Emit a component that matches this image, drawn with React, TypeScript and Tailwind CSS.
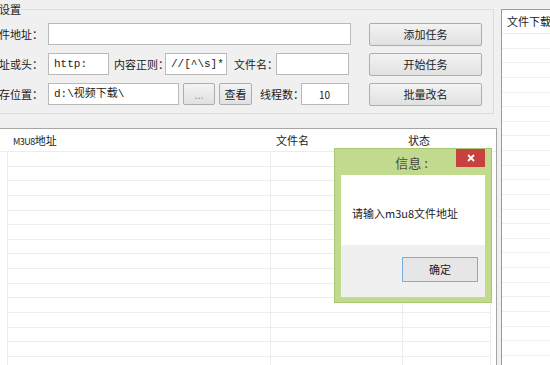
import React from "react"

const cjk = "font-['Noto_Sans_CJK_SC',sans-serif]"

function Label({ text, w }: { text: string; w: string }) {
  return (
    <div className={`flex shrink-0 justify-end whitespace-nowrap text-[11px] text-[#1a1a1a] ${w}`}>
      <span>{text}</span>
    </div>
  )
}

function Field({ value, w, mono }: { value?: string; w: string; mono?: boolean }) {
  return (
    <div
      className={`flex h-[22px] shrink-0 items-center border border-[#b9b9b9] bg-white px-[5px] text-[11px] text-[#222] ${w} ${
        mono ? "font-['Liberation_Mono','Noto_Sans_CJK_SC',monospace] text-[10px]" : ""
      }`}
    >
      {value}
    </div>
  )
}

function Btn({ children, className }: { children: React.ReactNode; className: string }) {
  return (
    <div
      className={`flex shrink-0 items-center justify-center rounded-[2px] border border-[#adadad] bg-gradient-to-b from-[#f3f3f3] to-[#e1e1e1] text-[11px] text-[#222] ${className}`}
    >
      {children}
    </div>
  )
}

const tableRows = Array.from({ length: 15 })
const sideRows = Array.from({ length: 23 })

export default function App() {
  return (
    <div className={`relative h-[365px] w-[550px] overflow-hidden bg-[#f0f0f0] ${cjk}`}>
      <div className="-ml-[10px] flex gap-[4px]">
        {/* left side: settings + task list */}
        <div className="flex w-[507px] shrink-0 flex-col">
          <fieldset className="mt-[1px] w-[504px] border border-[#dcdcdc] pb-[7px] pt-[6px]">
            <legend className="ml-[8px] px-0 text-[11px] leading-[16px] text-[#1a1a1a]">设置</legend>
            <div className="flex">
              <div className="flex flex-col gap-[8px]">
                <div className="flex h-[22px] items-center">
                  <Label text="文件地址：" w="w-[52px]" />
                  <div className="ml-[5px]">
                    <Field w="w-[303px]" />
                  </div>
                </div>
                <div className="flex h-[22px] items-center">
                  <Label text="网址或头：" w="w-[52px]" />
                  <div className="ml-[5px]">
                    <Field w="w-[61px]" value="http:" mono />
                  </div>
                  <span className="ml-[5px] whitespace-nowrap text-[11px] text-[#1a1a1a]">内容正则：</span>
                  <div className="ml-[-4px]">
                    <Field w="w-[62px]" value="//[^\s]*" mono />
                  </div>
                  <span className="ml-[7px] whitespace-nowrap text-[11px] text-[#1a1a1a]">文件名：</span>
                  <div className="ml-[-2px]">
                    <Field w="w-[73px]" />
                  </div>
                </div>
                <div className="flex h-[22px] items-center">
                  <Label text="保存位置：" w="w-[52px]" />
                  <div className="ml-[5px]">
                    <Field w="w-[131px]" value="d:\视频下载\" mono />
                  </div>
                  <Btn className="ml-[4px] h-[22px] w-[32px] text-[#999]">...</Btn>
                  <Btn className="ml-[4px] h-[22px] w-[33px]">查看</Btn>
                  <span className="ml-[8px] whitespace-nowrap text-[11px] text-[#1a1a1a]">线程数：</span>
                  <div className="ml-[-3px]">
                    <div className="flex h-[22px] w-[48px] items-center border border-[#b9b9b9] bg-white pl-[17px] text-[10px] text-[#222]">
                      10
                    </div>
                  </div>
                </div>
              </div>
              <div className="ml-[18px] flex flex-col gap-[7px]">
                <Btn className="h-[23px] w-[113px]">添加任务</Btn>
                <Btn className="h-[23px] w-[113px]">开始任务</Btn>
                <Btn className="h-[23px] w-[113px]">批量改名</Btn>
              </div>
            </div>
          </fieldset>

          {/* task table */}
          <div className="mt-[14px] h-[260px] w-[507px] border-t border-r border-[#a6a6a6] bg-white">
            <div className="flex h-[23px] items-center border-b border-[#ececec] text-[11px] text-[#1a1a1a]">
              <div className="w-[23px] shrink-0" />
              <div className="w-[263px] shrink-0">
                <span className="text-[9px] tracking-[-0.5px]">M3U8</span>地址
              </div>
              <div className="w-[132px] shrink-0">文件名</div>
              <div className="w-[88px] shrink-0">状态</div>
            </div>
            <div className="flex">
              <div className="h-[220px] w-[18px] shrink-0 border-r border-[#ececec]" />
              <div className="h-[220px] w-[263px] shrink-0 border-r border-[#ececec]">
                {tableRows.map((_, i) => (
                  <div key={i} className="h-[14.64px] border-b border-[#ededed]" />
                ))}
              </div>
              <div className="h-[220px] w-[132px] shrink-0 border-r border-[#ececec]">
                {tableRows.map((_, i) => (
                  <div key={i} className="h-[14.64px] border-b border-[#ededed]" />
                ))}
              </div>
              <div className="h-[220px] w-[88px] shrink-0 border-r border-[#ececec]">
                {tableRows.map((_, i) => (
                  <div key={i} className="h-[14.64px] border-b border-[#ededed]" />
                ))}
              </div>
            </div>
          </div>
        </div>

        {/* right side: download list */}
        <div className="mt-[9px] h-[360px] w-[70px] shrink-0 border-l border-t border-[#9a9a9a] bg-white">
          <div className="flex h-[24px] items-center whitespace-nowrap border-b border-[#ededed] pl-[5px] text-[11px] text-[#1a1a1a]">
            文件下载
          </div>
          {sideRows.map((_, i) => (
            <div key={i} className="h-[14.64px] border-b border-[#efefef]" />
          ))}
        </div>
      </div>

      {/* message box */}
      <div className="absolute left-[334px] top-[148px] flex h-[155px] w-[158px] flex-col border border-[#a9c670] bg-[#c1da8d] px-[6px] pb-[5px]">
        <div className="flex h-[26px] shrink-0">
          <div className="flex flex-1 items-center justify-center pl-[26px] pt-[1px] text-[13px] text-[#4a4a4a]">
            信息 :
          </div>
          <div className="flex h-[18px] w-[29px] items-center justify-center bg-[#c7423f] text-white">
            <svg width="8" height="8" viewBox="0 0 8 8">
              <path d="M1 1 L7 7 M7 1 L1 7" stroke="white" strokeWidth="1.8" />
            </svg>
          </div>
        </div>
        <div className="flex h-[70px] shrink-0 items-center bg-white pl-[11px] pt-[6px] text-[11px] text-[#222]">
          请输入m3u8文件地址
        </div>
        <div className="flex flex-1 items-start justify-end bg-[#f0f0f0] pr-[7px] pt-[12px]">
          <div className="flex h-[25px] w-[76px] items-center justify-center border border-[#78ade3] bg-[#e6e6e6] text-[11px] text-[#222]">
            确定
          </div>
        </div>
      </div>
    </div>
  )
}
